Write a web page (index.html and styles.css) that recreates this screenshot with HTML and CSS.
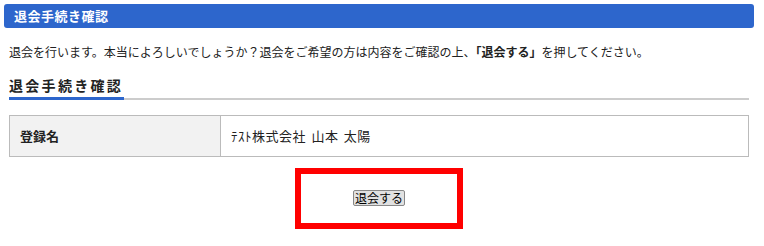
FILE: index.html
```html
<!DOCTYPE html>
<html lang="ja">
<head>
<meta charset="utf-8">
<title>退会手続き確認</title>
<link rel="stylesheet" href="styles.css">
</head>
<body>
<div class="page">
  <div class="title-bar">退会手続き確認</div>
  <div class="content">
    <p class="lead">退会を行います。本当によろしいでしょうか？退会をご希望の方は内容をご確認の上、<strong>「退会する」</strong>を押してください。</p>
    <h2 class="section-head"><span>退会手続き確認</span></h2>
    <table class="info">
      <tr>
        <th>登録名</th>
        <td>ﾃｽﾄ株式会社 山本 太陽</td>
      </tr>
    </table>
    <div class="actions">
      <div class="highlight">
        <button class="btn" type="button">退会する</button>
      </div>
    </div>
  </div>
</div>
</body>
</html>
```
FILE: styles.css
```css
html, body {
  margin: 0;
  padding: 0;
  background: #ffffff;
}
body {
  padding: 4px;
  font-family: "Noto Sans CJK JP", "Noto Sans", sans-serif;
  color: #222222;
}
.page {
  width: 750px;
}
.title-bar {
  height: 24px;
  line-height: 24px;
  background: #2d66cc;
  color: #ffffff;
  font-size: 13px;
  font-weight: bold;
  padding-left: 10px;
  border-radius: 3px;
  letter-spacing: 0.5px;
}
.content {
  padding: 0 5px;
}
.lead {
  margin: 15px 0 0;
  font-size: 12px;
  line-height: 18px;
}
.lead strong {
  font-weight: bold;
}
.section-head {
  margin: 14px 0 0;
  font-size: 14px;
  line-height: 20px;
  font-weight: bold;
  letter-spacing: 2.3px;
  border-bottom: 2px solid #cccccc;
}
.section-head span {
  display: inline-block;
  padding-bottom: 2px;
  border-bottom: 3px solid #2d66cc;
  margin-bottom: -2px;
  padding-right: 1px;
}
.info {
  margin-top: 15px;
  width: 100%;
  border-collapse: collapse;
  font-size: 13px;
}
.info th, .info td {
  border: 1px solid #bbbbbb;
  height: 40px;
  padding: 0 10px;
  text-align: left;
  line-height: 18px;
}
.info th {
  width: 190px;
  background: #f2f2f2;
  font-weight: bold;
}
.info td {
  background: #ffffff;
  letter-spacing: 0.5px;
  word-spacing: 2px;
}
.actions {
  display: flex;
  justify-content: center;
  margin-top: 11px;
}
.highlight {
  width: 156px;
  height: 49px;
  border: 6px solid #ff0000;
  display: flex;
  align-items: center;
  justify-content: center;
}
.btn {
  font-family: "Noto Sans CJK JP", sans-serif;
  font-size: 12px;
  line-height: 14px;
  padding: 0 1px;
  margin-top: -2px;
  background: #e1e1e1;
  border: 1px solid #888888;
  border-radius: 2px;
  color: #000000;
}
```
